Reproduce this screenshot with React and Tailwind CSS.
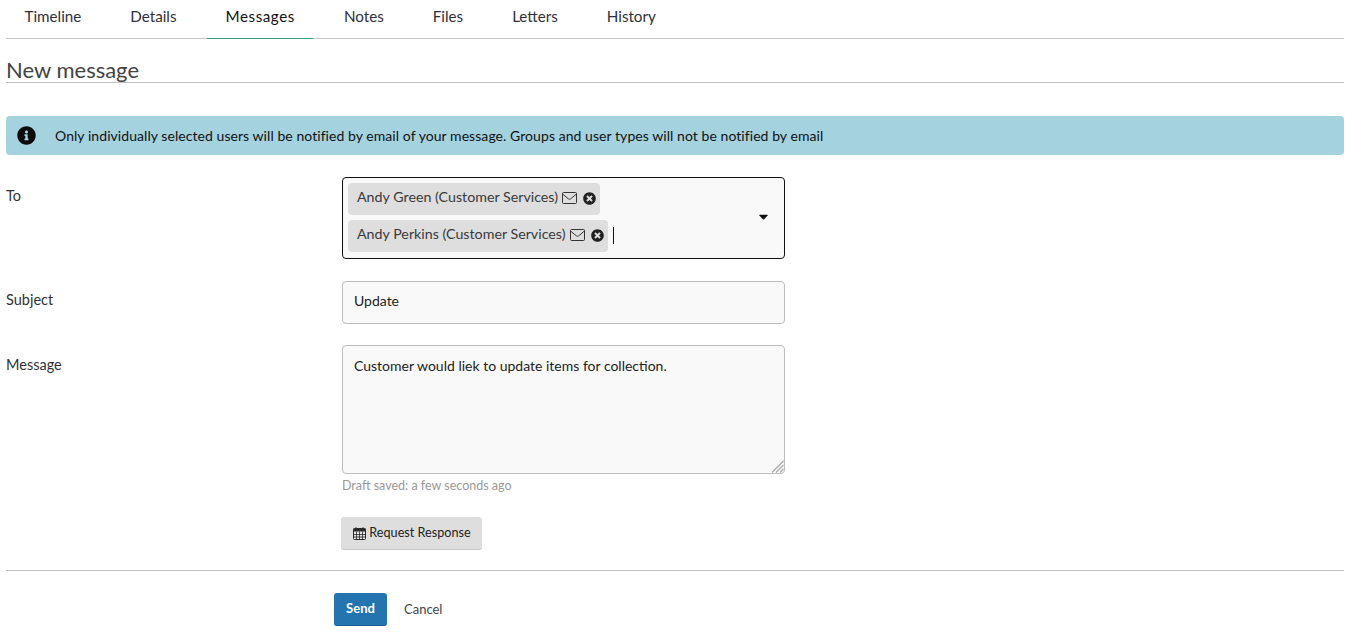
import React from "react";
import { FaInfoCircle, FaTimesCircle, FaCaretDown } from "react-icons/fa";

const tabs = ["Timeline", "Details", "Messages", "Notes", "Files", "Letters", "History"];

function Envelope() {
  return (
    <svg width="15" height="12" viewBox="0 0 15 12" fill="none" stroke="#333" strokeWidth="1" className="ml-[4px] shrink-0">
      <rect x="0.5" y="0.5" width="14" height="11" rx="1" />
      <path d="M0.8 2.2 L6.3 6.8 Q7.5 7.7 8.7 6.8 L14.2 2.2" />
    </svg>
  );
}

function CalendarIcon() {
  return (
    <svg width="13" height="13" viewBox="0 0 13 13" className="shrink-0">
      <rect x="0.5" y="1.5" width="12" height="11" rx="1" fill="#fff" fillOpacity="0.15" stroke="#2a2a2a" />
      <rect x="0.5" y="1.5" width="12" height="3" fill="#2a2a2a" />
      <path d="M3 .5v3M10 .5v3" stroke="#2a2a2a" strokeWidth="1.6" />
      <path d="M3.5 4.5v8M6.5 4.5v8M9.5 4.5v8M.5 7.5h12M.5 10h12" stroke="#2a2a2a" strokeWidth="0.8" />
    </svg>
  );
}

function Chip({ name }) {
  return (
    <div className="flex items-center h-[32px] pl-[9px] pr-[4px] pb-[2px] bg-[#dedede] rounded-[4px] text-[14.25px] text-[#3a3a3a]">
      <span className="pb-[3px]">{name}</span>
      <Envelope />
      <FaTimesCircle className="ml-[6px] text-[13px] text-[#222]" />
    </div>
  );
}

export default function App() {
  return (
    <div className="w-[1356px] h-[634px] overflow-hidden bg-white pl-[6px] pr-[12px] font-['Lato','Open_Sans',sans-serif] text-[#222]">
      <div className="flex gap-[12px] h-[39px] border-b border-[#c4c4c4]">
        {tabs.map((t) => (
          <div
            key={t}
            className={
              "h-[39px] px-[18.5px] pt-[6px] text-[15.2px] leading-[20px] " +
              (t === "Messages" ? "border-b border-[#3a9a85] text-[#111] tracking-[0.55px]" : "text-[#2f2f3a]")
            }
          >
            {t}
          </div>
        ))}
      </div>

      <div className="h-[44px] border-b border-[#c4c4c4] pt-[18px] text-[22px] leading-[26px] text-[#444]">New message</div>

      <div className="mt-[33px] h-[39px] flex items-center bg-[#a5d2df] rounded-[4px] text-[14px] tracking-[0.06px] text-[#111]">
        <FaInfoCircle className="ml-[11px] text-[19px] text-[#0c0c0c]" />
        <span className="ml-[19px] pb-[1px]">
          Only individually selected users will be notified by email of your message. Groups and user types will not be notified by email
        </span>
      </div>

      <div className="mt-[22px] grid grid-cols-[336px_443px] gap-y-[21px]">
        <div className="pt-[9px] text-[14.5px] leading-[20px] text-[#333]">To</div>
        <div className="relative h-[82px] mb-[1px] border border-[#111] rounded-[4px] bg-[#f9f9f9] pl-[5px] pt-[5px] flex flex-col items-start gap-[5px]">
          <Chip name="Andy Green (Customer Services)" />
          <div className="flex items-center gap-[5px]">
            <Chip name="Andy Perkins (Customer Services)" />
            <div className="w-px h-[17px] bg-[#111] mb-[1px]" />
          </div>
          <FaCaretDown className="absolute right-[13px] top-[31px] text-[15px] text-[#111]" />
        </div>

        <div className="pt-[9px] text-[14.5px] leading-[20px] text-[#333]">Subject</div>
        <input
          readOnly
          value="Update"
          className="h-[43px] border border-[#bdbdbd] rounded-[4px] bg-[#f9f9f9] px-[11px] pb-[5px] text-[14px] text-[#222] outline-none"
        />

        <div className="pt-[10px] text-[14.5px] leading-[20px] text-[#333]">Message</div>
        <div>
          <div className="relative">
            <textarea
              readOnly
              defaultValue="Customer would liek to update items for collection."
              className="block w-full h-[129px] resize-none border border-[#bdbdbd] rounded-[4px] bg-[#f9f9f9] px-[11px] py-[10px] text-[14px] leading-[20px] text-[#222] outline-none"
            />
            <svg width="13" height="13" viewBox="0 0 13 13" stroke="#a8a8a8" strokeWidth="1.2" className="absolute right-[1px] bottom-[1px]">
              <path d="M1 12.5L12.5 1M5 12.5L12.5 5M9 12.5L12.5 9" />
            </svg>
          </div>
          <div className="mt-[4px] text-[12.5px] leading-[16px] text-[#999]">Draft saved: a few seconds ago</div>
          <button className="mt-[23px] -ml-px w-[141px] h-[33px] pt-[1px] pl-[1px] flex items-center justify-center gap-[3px] bg-[#dedede] border-b border-[#c8c8c8] rounded-[3px] text-[12.65px] text-[#222]">
            <CalendarIcon />
            Request Response
          </button>
        </div>
      </div>

      <div className="mt-[20px] border-t border-[#c4c4c4]" />

      <div className="mt-[22px] ml-[328px] flex items-center">
        <button className="w-[53px] h-[33px] bg-[#2474b0] border-b border-[#1d5f92] rounded-[3px] text-[13px] font-bold text-white">Send</button>
        <span className="ml-[17px] text-[13px] text-[#444]">Cancel</span>
      </div>
    </div>
  );
}
